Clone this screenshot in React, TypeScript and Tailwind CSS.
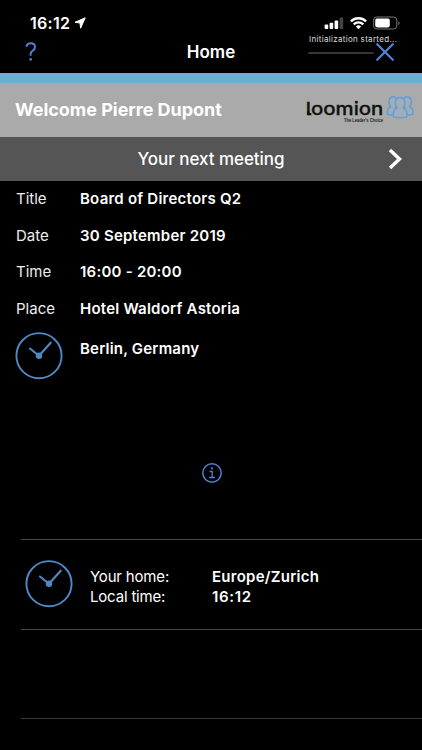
import React from 'react';

interface MeetingRow {
  label: string;
  value: string;
}

const MEETING_ROWS: MeetingRow[] = [
  { label: 'Title', value: 'Board of Directors Q2' },
  { label: 'Date', value: '30 September 2019' },
  { label: 'Time', value: '16:00 - 20:00' },
  { label: 'Place', value: 'Hotel Waldorf Astoria' },
];

const ClockIcon: React.FC = () => (
  <svg className="h-12 w-12 shrink-0" viewBox="0 0 48 48" fill="none" stroke="#4f89c4">
    <circle cx="24" cy="23.7" r="22.6" strokeWidth="1.9" />
    <path d="M15 16.5l9 7.2 11.7-13" strokeWidth="2.1" strokeLinecap="round" />
    <circle cx="24" cy="23.7" r="3.2" fill="#4f89c4" stroke="none" />
  </svg>
);

const StatusBar: React.FC = () => (
  <div className="flex h-[34px] items-end justify-between pl-[30px] pr-[22px]">
    <div className="flex items-center gap-1">
      <span className="text-[16px] font-semibold leading-[22px] tracking-[0.3px]">16:12</span>
      <svg className="h-3 w-3" viewBox="0 0 12 12" fill="#fff" stroke="#fff" strokeLinejoin="round">
        <path d="M11.2.8L1 5.3l5 .7.6 5.2z" />
      </svg>
    </div>
    <svg className="mb-1 h-[14px] w-[76px]" viewBox="0 0 76 14">
      <g fill="#fff">
        <rect x="0.6" y="8.6" width="3.6" height="4.4" rx="1" />
        <rect x="5.6" y="6.8" width="3.6" height="6.2" rx="1" />
        <rect x="10.6" y="4.4" width="3.6" height="8.6" rx="1" />
        <rect x="15.6" y="1.5" width="3.6" height="11.5" rx="1" fill="#444" />
      </g>
      <g fill="none" stroke="#fff" strokeWidth="2.3">
        <path d="M26.9 5.4a10.8 10.8 0 0 1 15.2 0" />
        <path d="M29.7 8.4a6.8 6.8 0 0 1 9.6 0" />
      </g>
      <path d="M31.9 10.6a3.7 3.7 0 0 1 5.2 0l-2.6 2.7z" fill="#fff" />
      <rect x="49.6" y="1" width="23.2" height="12" rx="3.2" fill="none" stroke="#777" />
      <rect x="51.2" y="2.6" width="14.6" height="8.8" rx="1.8" fill="#fff" />
      <path d="M74.3 5.2c1.7.7 1.7 3.1 0 3.8z" fill="#777" />
    </svg>
  </div>
);

const NavBar: React.FC = () => (
  <div className="relative flex h-[39px] items-center justify-between pl-[25px] pr-[28px] pb-[3px]">
    <svg className="h-5 w-3" viewBox="0 0 12 20" fill="none" stroke="#527fd0" strokeWidth="2">
      <path d="M1.5 4.8C1.7 2.5 3.4 1.2 5.7 1.2c2.5 0 4.3 1.5 4.3 3.8 0 2-1 2.9-2.4 3.8C6.2 9.8 5.6 10.6 5.6 12v1.7" />
      <circle cx="5.6" cy="17.4" r="1.3" fill="#527fd0" stroke="none" />
    </svg>
    <h1 className="absolute inset-x-0 text-center text-[17px] font-semibold leading-6">Home</h1>
    <svg className="h-[18px] w-[18px]" viewBox="0 0 18 18" stroke="#4d84d6" strokeWidth="2.2">
      <path d="M1.2 1.2l15.6 15.6M16.8 1.2L1.2 16.8" strokeLinecap="round" />
    </svg>
    <div className="absolute right-[23px] top-0 w-[90px]">
      <p className="whitespace-nowrap text-[8px] leading-[11px] tracking-[0.31px] text-[#ddd]">
        Initialization started...
      </p>
      <div className="mt-[7px] -ml-px h-[2px] w-[66px] rounded-full bg-[#353537]" />
    </div>
  </div>
);

const Logo: React.FC = () => (
  <svg className="h-[34px] w-[112px]" viewBox="0 0 112 34">
    <text
      x="0.8"
      y="22.3"
      textLength="77.6"
      lengthAdjust="spacingAndGlyphs"
      fontSize="17.5"
      fontWeight="500"
      fontFamily="Inter, sans-serif"
      fill="#111"
      stroke="#111"
      strokeWidth="0.3"
    >
      loomion
    </text>
    {/* curved foot of the leading "l" */}
    <path d="M3.2 18.5v1.2q0 1.5 1.6 1.5h1.6" fill="none" stroke="#111" strokeWidth="2.2" />
    <text
      x="39"
      y="29"
      textLength="39"
      lengthAdjust="spacingAndGlyphs"
      fontSize="4.5"
      fontWeight="700"
      fontFamily="'Liberation Sans', sans-serif"
      fill="#222"
    >
      The Leader's Choice
    </text>
    <g fill="#a3adb6" stroke="#619fd9" strokeWidth="1.6" strokeLinejoin="round">
      <path d="M82.5 21.3c-.5-4.8.3-6.4 3-7.6-2.6-3.8-1.7-9.9 2.5-9.9s5.2 6.1 2.6 9.900v7.600c-2.5.9-5.7.9-8.1 0z" />
      <path d="M107.8 21.3c.5-4.8-.3-6.4-3-7.6 2.6-3.8 1.7-9.9-2.5-9.9s-5.2 6.1-2.6 9.900v7.600c2.5.9 5.7.9 8.1 0z" />
      <path d="M88.3 23.8c-.5-5.4.5-7.4 3.8-8.7-3-4-2.2-10.6 3-10.6s6 6.6 3 10.6c3.3 1.3 4.3 3.3 3.8 8.700-3.6 1.300-10 1.300-13.600 0z" />
    </g>
  </svg>
);

export default function App() {
  return (
    <div className="flex h-[750px] w-[422px] flex-col overflow-hidden bg-black font-['Inter',sans-serif] text-[15px] text-white">
      <StatusBar />
      <NavBar />

      <div className="h-[10px] shrink-0 bg-[#6badd3]" />
      <div className="flex h-[54px] shrink-0 items-center justify-between bg-[#aaa] pl-[15px] pr-[5px]">
        <span className="mb-px text-[18px] font-bold tracking-[-0.03px]">Welcome Pierre Dupont</span>
        <Logo />
      </div>
      <div className="flex h-[44px] shrink-0 items-center bg-[#555] pr-5">
        <span className="mt-[2px] flex-1 pl-[34px] text-center text-[17px] font-medium tracking-[-0.05px]">
          Your next meeting
        </span>
        <svg className="h-[22px] w-[14px]" viewBox="0 0 14 22" fill="none" stroke="#fff" strokeWidth="3.4">
          <path d="M2 2l9.5 9L2 20" />
        </svg>
      </div>

      <dl className="shrink-0">
        {MEETING_ROWS.map((row) => (
          <div key={row.label} className="flex h-[36.7px] items-center pl-4">
            <dt className="w-16 text-[#eee]">{row.label}</dt>
            <dd className="font-semibold tracking-[0.23px]">{row.value}</dd>
          </div>
        ))}
      </dl>
      <div className="flex h-[56px] shrink-0 items-center pl-[15px]">
        <ClockIcon />
        <span className="mb-[14px] ml-[17px] font-semibold tracking-[0.2px]">Berlin, Germany</span>
      </div>

      <div className="flex flex-1 items-center justify-center pl-[2px] pt-6">
        <svg className="h-5 w-5" viewBox="0 0 20 20" fill="none" stroke="#527fd0" strokeWidth="1.5">
          <circle cx="10" cy="10" r="9.2" />
          <path d="M7.5 8.5h2.7v6M7 14.5h6" strokeWidth="1.3" />
          <circle cx="10" cy="5.4" r="1.1" fill="#527fd0" stroke="none" />
        </svg>
      </div>

      <div className="ml-[21px] flex h-[91px] shrink-0 items-center border-y border-[#484848] pb-px pl-1">
        <ClockIcon />
        <div className="ml-[17px] mt-[5px] grid grid-cols-[122px_auto] leading-[20px]">
          <span className="tracking-[-0.18px]">Your home:</span>
          <span className="font-semibold tracking-[0.25px]">Europe/Zurich</span>
          <span className="tracking-[-0.18px]">Local time:</span>
          <span className="font-semibold tracking-[0.7px]">16:12</span>
        </div>
      </div>
      <div className="mb-[31px] ml-[21px] h-[89px] shrink-0 border-b border-[#383838]" />
    </div>
  );
}
